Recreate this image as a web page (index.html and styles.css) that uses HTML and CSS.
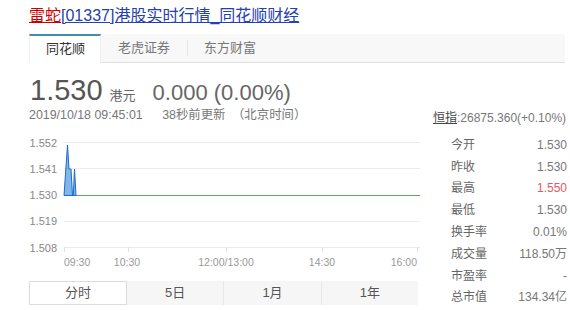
FILE: index.html
```html
<!DOCTYPE html>
<html lang="zh-CN">
<head>
<meta charset="utf-8">
<title>雷蛇[01337]港股实时行情_同花顺财经</title>
<link rel="stylesheet" href="styles.css">
</head>
<body>
<div class="page">
  <h1 class="title"><a class="name" href="#">雷蛇</a><a class="link" href="#">[01337]港股实时行情_同花顺财经</a></h1>

  <div class="tabs">
    <div class="tab active">同花顺</div>
    <div class="tab">老虎证券</div>
    <div class="tab">东方财富</div>
  </div>

  <div class="main">
    <div class="left">
      <div class="quote">
        <span class="price">1.530</span>
        <span class="unit">港元</span>
        <span class="change">0.000 (0.00%)</span>
      </div>
      <div class="time">
        <span>2019/10/18 09:45:01</span>
        <span class="ago">38秒前更新</span>
        <span class="tz">（北京时间）</span>
      </div>
      <svg class="chart" width="400" height="148" viewBox="29 132 400 148" xmlns="http://www.w3.org/2000/svg">
        <g stroke="#ececec" stroke-width="1">
          <line x1="64" y1="142.5" x2="420" y2="142.5"/>
          <line x1="64" y1="168.5" x2="420" y2="168.5"/>
          <line x1="64" y1="221.5" x2="420" y2="221.5"/>
          <line x1="64" y1="247.5" x2="420" y2="247.5"/>
        </g>
        <g stroke="#e2e2e2" stroke-width="1">
          <line x1="64.5" y1="247" x2="64.5" y2="252"/>
          <line x1="128.5" y1="247" x2="128.5" y2="252"/>
          <line x1="226.5" y1="247" x2="226.5" y2="252"/>
          <line x1="322.5" y1="247" x2="322.5" y2="252"/>
          <line x1="417.5" y1="247" x2="417.5" y2="252"/>
        </g>
        <line x1="64" y1="195.5" x2="420" y2="195.5" stroke="#62a562" stroke-width="1"/>
        <polygon points="64,195.5 67.5,145 69,169 71,169 72.5,195.5 73.3,195.5 74.5,169 76,195.5" fill="#4d95e0" fill-opacity="0.7" stroke="#1a6cc8" stroke-width="1" stroke-linejoin="round"/>
        <g class="ylab" text-anchor="end">
          <text x="57" y="146.5">1.552</text>
          <text x="57" y="172.5">1.541</text>
          <text x="57" y="199">1.530</text>
          <text x="57" y="225">1.519</text>
          <text x="57" y="251.5">1.508</text>
        </g>
        <g class="xlab">
          <text x="64" y="266">09:30</text>
          <text x="127" y="266" text-anchor="middle">10:30</text>
          <text x="226" y="266" text-anchor="middle">12:00/13:00</text>
          <text x="322" y="266" text-anchor="middle">14:30</text>
          <text x="417" y="266" text-anchor="end">16:00</text>
        </g>
      </svg>
      <div class="periods">
        <div class="period active">分时</div>
        <div class="period">5日</div>
        <div class="period">1月</div>
        <div class="period">1年</div>
      </div>
    </div>

    <div class="right">
      <div class="index"><a class="idx" href="#">恒指</a>:26875.360(+0.10%)</div>
      <table class="stats">
        <tr><td class="k">今开</td><td class="v">1.530</td></tr>
        <tr><td class="k">昨收</td><td class="v">1.530</td></tr>
        <tr><td class="k">最高</td><td class="v up">1.550</td></tr>
        <tr><td class="k">最低</td><td class="v">1.530</td></tr>
        <tr><td class="k">换手率</td><td class="v">0.01%</td></tr>
        <tr><td class="k">成交量</td><td class="v">118.50万</td></tr>
        <tr><td class="k">市盈率</td><td class="v">-</td></tr>
        <tr><td class="k">总市值</td><td class="v">134.34亿</td></tr>
      </table>
    </div>
  </div>
</div>
</body>
</html>
```

FILE: styles.css
```css
* { box-sizing: border-box; }

html, body {
  margin: 0;
  padding: 0;
  background: #fff;
}

body {
  font-family: "Liberation Sans", "Noto Sans CJK SC", sans-serif;
  color: #666;
  overflow: hidden;
}

.page {
  padding: 6px 0 0 29px;
  width: 570px;
}

.title {
  margin: 0;
  font-size: 16px;
  font-weight: normal;
  line-height: 20px;
  white-space: nowrap;
}

.title a { text-decoration: underline; }
.title .name { color: #c00; }
.title .link { color: #2440b3; }

.tabs {
  margin-top: 8px;
  width: 536px;
  height: 29px;
  display: flex;
  background: #f8f8f8;
  border-bottom: 1px solid #dedede;
}

.tab {
  height: 28px;
  padding: 0 17px;
  font-size: 13px;
  line-height: 28px;
  color: #777;
  position: relative;
}

.tab + .tab::before {
  content: "";
  position: absolute;
  left: 0;
  top: 6px;
  height: 16px;
  border-left: 1px solid #e6e6e6;
}

.tab.active + .tab::before { display: none; }

.tab.active {
  background: #fff;
  color: #333;
  height: 29px;
  line-height: 25px;
  border-top: 2px solid #3f8cab;
  border-left: 1px solid #eee;
  border-right: 1px solid #eee;
  padding: 0 15px 0 16px;
}

.main {
  display: flex;
}

.left {
  width: 404px;
}

.quote {
  margin-top: 11px;
  height: 32px;
  display: flex;
  align-items: baseline;
  white-space: nowrap;
  padding-left: 1px;
}

.price {
  font-size: 29px;
  line-height: 32px;
  color: #555;
}

.unit {
  font-size: 13px;
  color: #666;
  margin-left: 7px;
}

.change {
  font-size: 22px;
  color: #666;
  margin-left: 17px;
}

.time {
  margin-top: 1px;
  font-size: 12.4px;
  line-height: 16px;
  color: #777;
  white-space: nowrap;
}

.time .ago { margin-left: 16px; }
.time .tz { margin-left: 3px; }

.chart {
  display: block;
  margin-top: 9px;
}

.ylab text {
  font-family: "Liberation Sans", sans-serif;
  font-size: 11px;
  fill: #888;
}

.xlab text {
  font-family: "Liberation Sans", sans-serif;
  font-size: 10.5px;
  fill: #999;
}

.periods {
  margin-top: 1px;
  width: 389px;
  height: 24px;
  display: flex;
  background: #f6f6f6;
}

.period {
  flex: 1;
  text-align: center;
  font-size: 13px;
  line-height: 24px;
  color: #555;
  border-left: 1px solid #e9e9e9;
}

.period.active {
  background: #fff;
  border: 1px solid #dcdcdc;
  line-height: 22px;
  flex: 0 0 98px;
}

.period.active + .period { border-left: none; }

.right {
  width: 134px;
  padding-top: 47px;
}

.index {
  font-size: 12px;
  line-height: 16px;
  color: #777;
  white-space: nowrap;
}

.index .idx {
  color: #444;
  text-decoration: underline;
}

.stats {
  margin-top: 8px;
  margin-left: 18px;
  width: 116px;
  border-collapse: collapse;
}

.stats td {
  padding: 0;
  height: 21.8px;
  font-size: 12px;
  line-height: 16px;
}

.stats .k {
  color: #666;
  text-align: left;
}

.stats .v {
  color: #777;
  text-align: right;
}

.stats .v.up { color: #e05a60; }
```
